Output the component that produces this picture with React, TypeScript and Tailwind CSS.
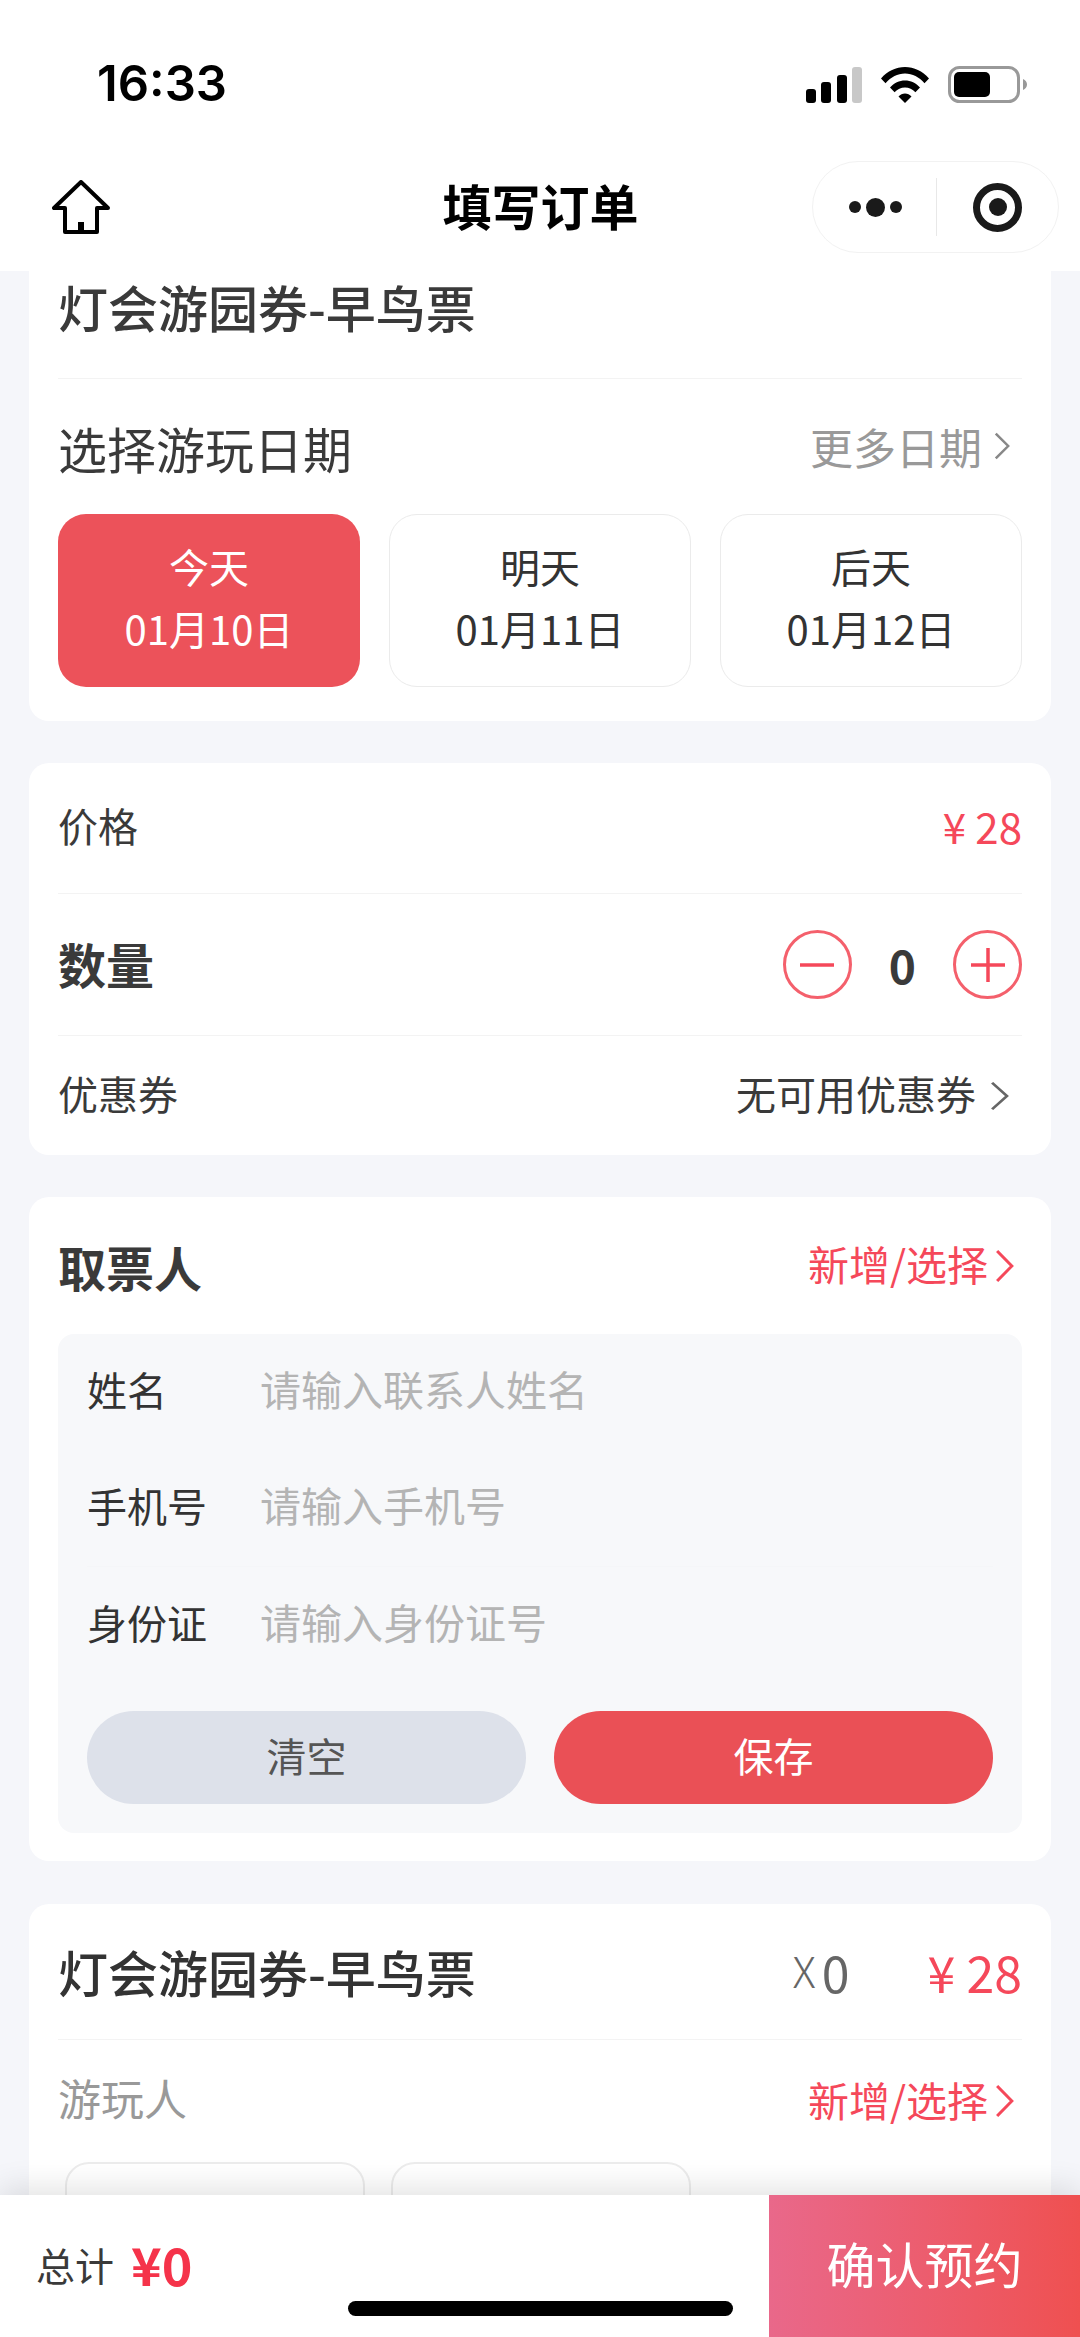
import { ReactNode } from "react";

const Chevron = ({ className = "" }: { className?: string }) => (
  <svg viewBox="0 0 18 34" preserveAspectRatio="none" className={className} fill="none" stroke="currentColor" strokeWidth="2.800">
    <path d="M2 2l14 15L2 32" />
  </svg>
);

const SignalIcon = () => (
  <svg viewBox="0 0 56 36" className="w-[56px] h-[36px]">
    <rect x="0" y="22" width="10" height="14" rx="3" fill="#000" />
    <rect x="15" y="15" width="10" height="21" rx="3" fill="#000" />
    <rect x="31" y="8" width="10" height="28" rx="3" fill="#000" />
    <rect x="46" y="0" width="10" height="36" rx="3" fill="#c8c8c8" />
  </svg>
);

const WifiIcon = () => (
  <svg viewBox="0 0 48 36" className="w-[48px] h-[36px]">
    <path d="M0 11.5C6.500 4 15 0 24 0s17.500 4 24 11.500l-4.500 4.800C38 10 31.500 6.500 24 6.500S10 10 4.500 16.300z" fill="#000" />
    <path d="M9 20.500C13 16 18.300 13.500 24 13.500s11 2.500 15 7l-4.600 4.800C31.600 22.200 28 20.500 24 20.500s-7.600 1.700-10.400 4.800z" fill="#000" />
    <path d="M17.500 29.500c1.800-2 4-3 6.500-3s4.700 1 6.500 3L24 36z" fill="#000" />
  </svg>
);

const BatteryIcon = () => (
  <svg viewBox="0 0 79 37" className="w-[79px] h-[37px]">
    <rect x="1.500" y="1.500" width="69" height="34" rx="10" fill="none" stroke="#999" strokeWidth="3" />
    <rect x="6" y="6" width="36" height="25" rx="5" fill="#000" />
    <path d="M75 13c2.500 1 4 3 4 5.500s-1.500 4.500-4 5.500z" fill="#999" />
  </svg>
);

const HomeIcon = () => (
  <svg viewBox="0 0 58 54" className="w-[58px] h-[54px]" fill="none" stroke="#000" strokeWidth="4" strokeLinejoin="round">
    <path d="M29 2L2 28h11v24h32V28h11z" />
    <rect x="26" y="42" width="6" height="10" fill="#000" stroke="none" />
  </svg>
);

const MenuCapsule = () => (
  <div className="flex h-[92px] w-[247px] items-center rounded-full border border-[#f2f2f2]">
    <div className="flex w-[123px] items-center justify-center gap-[5px] pl-[2px]">
      <span className="h-[12px] w-[12px] rounded-full bg-[#1a1a1a]" />
      <span className="h-[19px] w-[19px] rounded-full bg-[#1a1a1a]" />
      <span className="h-[12px] w-[12px] rounded-full bg-[#1a1a1a]" />
    </div>
    <div className="h-[58px] w-px bg-[#e8e8e8]" />
    <div className="flex flex-1 items-center justify-center">
      <div className="flex h-[49px] w-[49px] items-center justify-center rounded-full border-[7px] border-[#1a1a1a]">
        <span className="h-[18px] w-[18px] rounded-full bg-[#1a1a1a]" />
      </div>
    </div>
  </div>
);

const Card = ({ children, className = "" }: { children: ReactNode; className?: string }) => (
  <div className={`mx-[29px] bg-white px-[29px] ${className}`}>{children}</div>
);

const DateOption = ({ day, date, active }: { day: string; date: string; active?: boolean }) => (
  <div
    className={`flex h-[173px] w-[302px] flex-col items-center justify-center gap-[12px] rounded-[28px] pb-[7px] text-[40px] leading-[50px] ${
      active ? "bg-[#ec525a] text-white" : "border border-[#ebebeb] bg-white text-[#333]"
    }`}
  >
    <span>{day}</span>
    <span>{date}</span>
  </div>
);

const AddLink = () => (
  <div className="flex items-center gap-[7px] pr-[8px] text-[41px] leading-[50px] text-[#f5485a]">
    <span className="pb-[5px]">新增/选择</span>
    <Chevron className="h-[34px] w-[19px]" />
  </div>
);

const Stepper = ({ plus }: { plus?: boolean }) => (
  <div className="flex h-[69px] w-[69px] items-center justify-center rounded-full border-[3px] border-[#f4606c]">
    <svg viewBox="0 0 40 40" className="h-[40px] w-[40px]" stroke="#f5485a" strokeWidth="3.500">
      <path d="M3 20h34" />
      {plus && <path d="M20 3v34" />}
    </svg>
  </div>
);

const FormRow = ({ label, hint }: { label: string; hint: string }) => (
  <div className="flex h-[116px] items-center pb-[6px] text-[40px]">
    <span className="w-[173px] text-[#333]">{label}</span>
    <span className="text-[41px] text-[#b4b4b4]">{hint}</span>
  </div>
);

export default function App() {
  return (
    <div
      className="flex h-[2337px] w-[1080px] flex-col overflow-hidden bg-[#f5f6fa]"
      style={{ fontFamily: '"Noto Sans CJK SC", "Noto Sans", sans-serif' }}
    >
      {/* Status + nav */}
      <div className="h-[271px] shrink-0 bg-white">
        <div className="flex h-[161px] items-start justify-between pl-[97px] pr-[53px] pt-[58px]">
          <span className="text-[49px] font-semibold leading-[52px] text-black" style={{ fontFamily: "Inter, sans-serif" }}>
            16:33
          </span>
          <div className="flex items-center gap-[19px] pt-[8px]">
            <SignalIcon />
            <WifiIcon />
            <BatteryIcon />
          </div>
        </div>
        <div className="grid h-[92px] grid-cols-[1fr_auto_1fr] items-center pl-[52px] pr-[21px]">
          <HomeIcon />
          <span className="pb-[5px] pr-[30px] text-[49px] font-bold leading-[60px] text-black">填写订单</span>
          <div className="flex justify-end">
            <MenuCapsule />
          </div>
        </div>
      </div>

      {/* Scrolling content */}
      <div className="relative flex-1 overflow-hidden">
        <Card className="rounded-b-[20px] pb-[34px]">
          <div className="flex h-[108px] items-start border-b border-[#f3f3f3] pt-[9px] text-[50px] font-medium leading-[52px] text-[#3a3a3a]">
            灯会游园券-早鸟票
          </div>
          <div className="flex h-[135px] items-start justify-between pt-[39px]">
            <span className="text-[49px] leading-[60px] text-[#3a3a3a]">选择游玩日期</span>
            <div className="flex items-center gap-[12px] pr-[12px] text-[43px] leading-[56px] text-[#999]">
              更多日期
              <Chevron className="h-[28px] w-[16px] text-[#888]" />
            </div>
          </div>
          <div className="flex justify-between">
            <DateOption day="今天" date="01月10日" active />
            <DateOption day="明天" date="01月11日" />
            <DateOption day="后天" date="01月12日" />
          </div>
        </Card>

        <Card className="mt-[42px] rounded-[20px]">
          <div className="flex h-[131px] items-center justify-between border-b border-[#f3f3f3] pb-[6px]">
            <span className="text-[40px] text-[#3a3a3a]">价格</span>
            <span className="text-[42px] text-[#f5485a]">¥ 28</span>
          </div>
          <div className="flex h-[142px] items-center justify-between border-b border-[#f3f3f3]">
            <span className="pb-[4px] text-[48px] font-bold text-[#3a3a3a]">数量</span>
            <div className="flex items-center gap-[37px]">
              <Stepper />
              <span className="text-[46px] font-semibold text-[#3a3a3a]">0</span>
              <Stepper plus />
            </div>
          </div>
          <div className="flex h-[119px] items-center justify-between">
            <span className="pb-[5px] text-[40px] text-[#3a3a3a]">优惠券</span>
            <div className="flex items-center gap-[14px] pr-[13px] text-[40px] text-[#3a3a3a]">
              <span className="pb-[5px]">无可用优惠券</span>
              <Chevron className="h-[30px] w-[19px] text-[#666]" />
            </div>
          </div>
        </Card>

        <Card className="mt-[42px] rounded-[20px] pb-[28px]">
          <div className="flex h-[137px] items-center justify-between">
            <span className="text-[48px] font-bold text-[#3a3a3a]">取票人</span>
            <AddLink />
          </div>
          <div className="rounded-[16px] bg-[#f7f8fa] px-[29px] pb-[29px]">
            <FormRow label="姓名" hint="请输入联系人姓名" />
            <div className="border-b border-[#f5f6f8]">
              <FormRow label="手机号" hint="请输入手机号" />
            </div>
            <FormRow label="身份证" hint="请输入身份证号" />
            <div className="mt-[28px] flex justify-between text-[40px]">
              <div className="flex h-[93px] w-[439px] items-center justify-center rounded-full bg-[#dde1ea] pb-[5px] text-[#555]">清空</div>
              <div className="flex h-[93px] w-[439px] items-center justify-center rounded-full bg-[#ea5056] pb-[5px] text-white">保存</div>
            </div>
          </div>
        </Card>

        <Card className="mt-[43px] h-[400px] rounded-[20px]">
          <div className="flex h-[136px] items-center justify-between border-b border-[#f3f3f3]">
            <span className="text-[50px] font-medium text-[#333]">灯会游园券-早鸟票</span>
            <div className="flex items-center gap-[78px]">
              <span className="text-[50px] text-[#666]">
                <span className="mr-[6px] align-[5px] text-[43px] font-light">X</span>0
              </span>
              <span className="text-[50px] text-[#f5485a]">¥ 28</span>
            </div>
          </div>
          <div className="flex h-[122px] items-center justify-between">
            <span className="pb-[8px] text-[43px] text-[#999]">游玩人</span>
            <AddLink />
          </div>
          <div className="flex gap-[26px] pl-[7px]">
            <div className="h-[120px] w-[300px] rounded-[24px] border-2 border-[#ececec]" />
            <div className="h-[120px] w-[300px] rounded-[24px] border-2 border-[#ececec]" />
          </div>
        </Card>
      </div>

      {/* Bottom bar */}
      <div className="relative flex h-[142px] shrink-0 bg-white shadow-[0_-6px_30px_rgba(0,0,0,0.12)]">
        <div className="flex flex-1 items-center gap-[17px] pb-[4px] pl-[36px]">
          <span className="text-[39px] text-[#3a3a3a]">总计</span>
          <span className="text-[52px] font-bold text-[#f5334a]">¥0</span>
        </div>
        <div className="flex w-[311px] items-center justify-center bg-gradient-to-r from-[#e9688a] to-[#ef5050] pb-[6px] text-[49px] text-white">
          确认预约
        </div>
        <div className="absolute left-[348px] top-[106px] h-[15px] w-[385px] rounded-full bg-black" />
      </div>
    </div>
  );
}
